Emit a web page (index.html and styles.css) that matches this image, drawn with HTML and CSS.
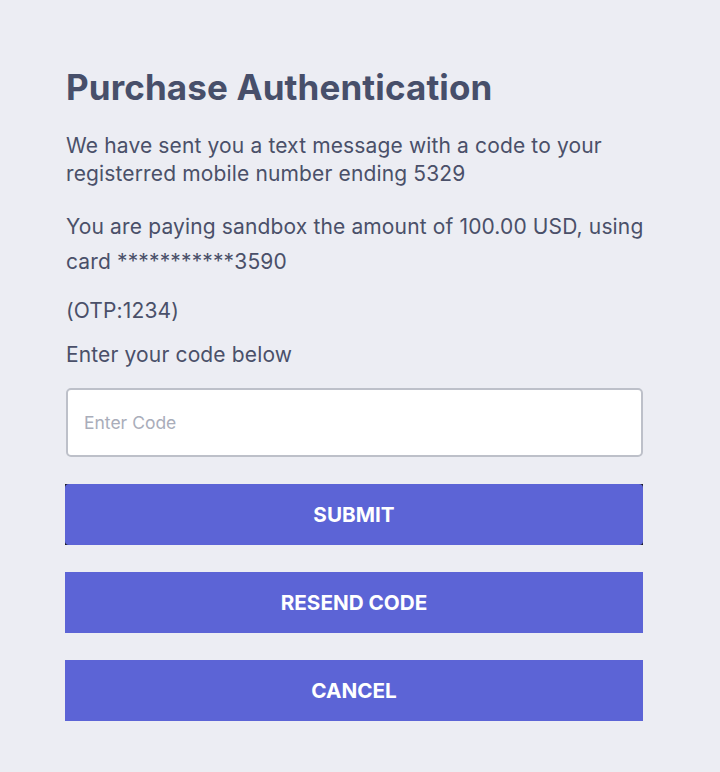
FILE: index.html
```html
<!DOCTYPE html>
<html lang="en">
<head>
<meta charset="utf-8">
<title>Purchase Authentication</title>
<link rel="stylesheet" href="styles.css">
</head>
<body>
<main class="auth">
  <h1 class="title">Purchase Authentication</h1>
  <p class="msg msg-sent">We have sent you a text message with a code to your registerred mobile number ending 5329</p>
  <p class="msg msg-pay">You are paying sandbox the amount of 100.00 USD, using card ***********3590</p>
  <p class="msg msg-otp">(OTP:1234)</p>
  <label class="msg msg-label" for="code">Enter your code below</label>
  <input class="code-input" id="code" type="text" placeholder="Enter Code">
  <div class="actions">
    <div class="btn-frame"><button class="btn btn-submit" type="button">SUBMIT</button></div>
    <button class="btn" type="button">RESEND CODE</button>
    <button class="btn" type="button">CANCEL</button>
  </div>
</main>
</body>
</html>
```
FILE: styles.css
```css
html, body {
  margin: 0;
  padding: 0;
  background: #ecedf3;
}
body {
  font-family: Inter, "Noto Sans", sans-serif;
  color: #4a5069;
}
.auth {
  width: 578px;
  padding: 65px 0 0 65px;
  display: flex;
  flex-direction: column;
}
.title {
  margin: 0 0 0 1px;
  font-size: 35px;
  letter-spacing: 0.12px;
  font-weight: 700;
  line-height: 44px;
  color: #474f6a;
}
.msg {
  margin: 0 -6px 0 1px;
  font-size: 21px;
  letter-spacing: 0.14px;
  line-height: 28px;
}
.msg-sent {
  margin-top: 23px;
}
.msg-pay {
  margin-top: 21px;
  line-height: 35px;
}
.msg-otp {
  margin-top: 18px;
}
.msg-label {
  margin-top: 16px;
}
.code-input {
  margin-top: 19px;
  margin-left: 1px;
  height: 69px;
  box-sizing: border-box;
  border: 2px solid #bdc0c9;
  border-radius: 5px;
  background: #fff;
  padding: 0 16px;
  font-family: Inter, "Noto Sans", sans-serif;
  font-size: 17.5px;
  color: #4a5069;
}
.code-input::placeholder {
  color: #a9adba;
}
.actions {
  margin-top: 27px;
  display: flex;
  flex-direction: column;
  gap: 27px;
}
.btn-frame {
  background: #1c1c24;
  display: flex;
}
.btn {
  height: 61px;
  border: 0;
  margin: 0;
  width: 100%;
  background: #5c64d6;
  color: #fff;
  font-family: Inter, "Noto Sans", sans-serif;
  font-size: 20.7px;
  font-weight: 700;
  cursor: pointer;
}
.btn-submit {
  border-radius: 4px;
}
```
